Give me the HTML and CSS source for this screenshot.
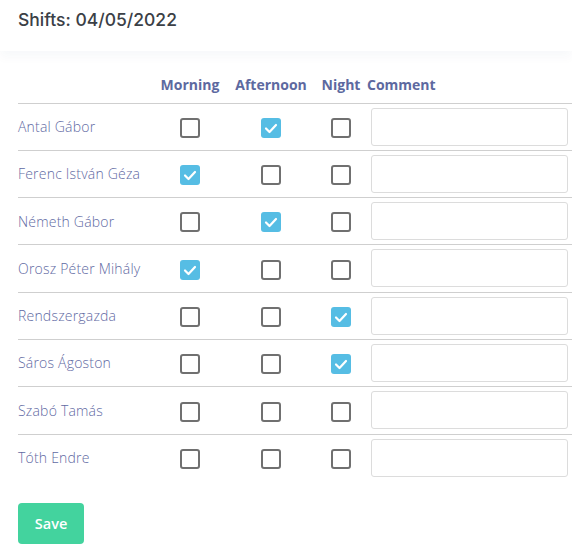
FILE: index.html
```html
<!DOCTYPE html>
<html lang="en">
<head>
    <meta charset="UTF-8">
    <meta name="viewport" content="width=device-width, initial-scale=1.0">
    <title>Shifts</title>
    <link rel="stylesheet" href="styles.css">
</head>
<body>
    <!-- Header -->
    <header class="page-header">
        <h1>Shifts: 04/05/2022</h1>
    </header>

    <!-- Shift table -->
    <main class="content">
        <table class="shifts">
            <colgroup>
                <col class="col-name">
                <col class="col-morning">
                <col class="col-afternoon">
                <col class="col-night">
                <col>
            </colgroup>
            <thead>
                <tr>
                    <th></th>
                    <th>Morning</th>
                    <th>Afternoon</th>
                    <th>Night</th>
                    <th class="comment-head">Comment</th>
                </tr>
            </thead>
            <tbody>
                <tr>
                    <td class="name">Antal Gábor</td>
                    <td><span class="box"></span></td>
                    <td><span class="box checked"><svg viewBox="0 0 20 20"><polyline points="5,10.5 8.5,14 15,7"/></svg></span></td>
                    <td><span class="box"></span></td>
                    <td><input type="text" class="comment"></td>
                </tr>
                <tr>
                    <td class="name">Ferenc István Géza</td>
                    <td><span class="box checked"><svg viewBox="0 0 20 20"><polyline points="5,10.5 8.5,14 15,7"/></svg></span></td>
                    <td><span class="box"></span></td>
                    <td><span class="box"></span></td>
                    <td><input type="text" class="comment"></td>
                </tr>
                <tr>
                    <td class="name">Németh Gábor</td>
                    <td><span class="box"></span></td>
                    <td><span class="box checked"><svg viewBox="0 0 20 20"><polyline points="5,10.5 8.5,14 15,7"/></svg></span></td>
                    <td><span class="box"></span></td>
                    <td><input type="text" class="comment"></td>
                </tr>
                <tr>
                    <td class="name">Orosz Péter Mihály</td>
                    <td><span class="box checked"><svg viewBox="0 0 20 20"><polyline points="5,10.5 8.5,14 15,7"/></svg></span></td>
                    <td><span class="box"></span></td>
                    <td><span class="box"></span></td>
                    <td><input type="text" class="comment"></td>
                </tr>
                <tr>
                    <td class="name">Rendszergazda</td>
                    <td><span class="box"></span></td>
                    <td><span class="box"></span></td>
                    <td><span class="box checked"><svg viewBox="0 0 20 20"><polyline points="5,10.5 8.5,14 15,7"/></svg></span></td>
                    <td><input type="text" class="comment"></td>
                </tr>
                <tr>
                    <td class="name">Sáros Ágoston</td>
                    <td><span class="box"></span></td>
                    <td><span class="box"></span></td>
                    <td><span class="box checked"><svg viewBox="0 0 20 20"><polyline points="5,10.5 8.5,14 15,7"/></svg></span></td>
                    <td><input type="text" class="comment"></td>
                </tr>
                <tr>
                    <td class="name">Szabó Tamás</td>
                    <td><span class="box"></span></td>
                    <td><span class="box"></span></td>
                    <td><span class="box"></span></td>
                    <td><input type="text" class="comment"></td>
                </tr>
                <tr>
                    <td class="name">Tóth Endre</td>
                    <td><span class="box"></span></td>
                    <td><span class="box"></span></td>
                    <td><span class="box"></span></td>
                    <td><input type="text" class="comment"></td>
                </tr>
            </tbody>
        </table>

        <button class="save-btn">Save</button>
    </main>
</body>
</html>
```

FILE: styles.css
```css
/* Reset */
* {
    margin: 0;
    padding: 0;
    box-sizing: border-box;
}

body {
    font-family: "Open Sans", Arial, sans-serif;
    background-color: #fff;
    color: #333;
}

/* Header */
.page-header {
    height: 51px;
    padding: 9px 18px 0;
    background-color: #fff;
    box-shadow: 0 6px 10px rgba(40, 60, 120, 0.035);
}

.page-header h1 {
    font-family: Inter, "Open Sans", sans-serif;
    font-size: 17.5px;
    font-weight: 500;
    line-height: 22px;
    color: #3b4046;
}

/* Table */
.content {
    padding: 15px 0 0 18px;
}

.shifts {
    width: 554px;
    table-layout: fixed;
    border-collapse: collapse;
}

.col-name { width: 135px; }
.col-morning { width: 74px; }
.col-afternoon { width: 88px; }
.col-night { width: 52px; }

.shifts th {
    height: 37px;
    padding: 0;
    font-size: 14px;
    font-weight: 700;
    color: #5d69a0;
    text-align: center;
    border-bottom: 1px solid #cfcfcf;
}

.shifts th.comment-head {
    text-align: left;
}

.shifts td {
    padding: 4px 4px 4.3px;
    text-align: center;
    vertical-align: middle;
    border-top: 1px solid #cfcfcf;
}

.shifts tbody tr:first-child td {
    border-top: none;
}

.shifts td.name {
    padding-left: 0;
    text-align: left;
    font-size: 14px;
    font-weight: 300;
    letter-spacing: 0.2px;
    color: #5f6aa3;
    white-space: nowrap;
}

/* Checkboxes */
.box {
    display: inline-block;
    width: 20px;
    height: 20px;
    border: 2px solid #707070;
    border-radius: 3px;
    vertical-align: middle;
}

.box.checked {
    border: none;
    background-color: #56bde4;
}

.box svg {
    display: block;
    width: 20px;
    height: 20px;
    fill: none;
    stroke: #fff;
    stroke-width: 2.2;
    stroke-linecap: round;
    stroke-linejoin: round;
}

.comment {
    display: block;
    width: 197px;
    height: 38px;
    border: 1px solid #dcdcdc;
    border-radius: 3px;
    background-color: #fff;
}

/* Save button */
.save-btn {
    margin-top: 22px;
    width: 66px;
    height: 41px;
    border: none;
    border-radius: 4px;
    background-color: #43d39e;
    color: #fff;
    font-family: "Open Sans", Arial, sans-serif;
    font-size: 14.5px;
    font-weight: 600;
    cursor: pointer;
}

.save-btn:hover {
    background-color: #36bf8c;
}
```
